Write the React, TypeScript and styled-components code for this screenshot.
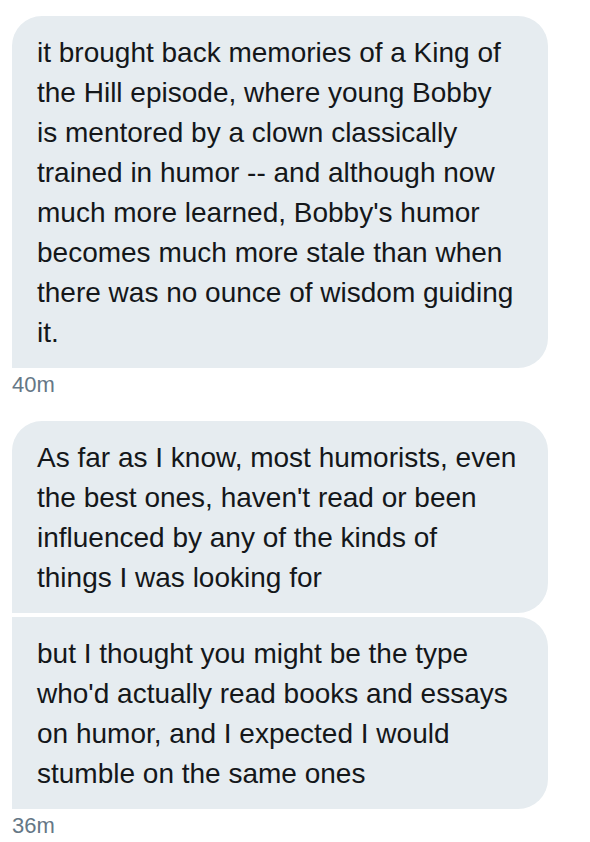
import React from "react";
import styled, { createGlobalStyle } from "styled-components";

const GlobalStyle = createGlobalStyle`
  html, body {
    margin: 0;
    padding: 0;
    background: #ffffff;
  }
  body {
    font-family: "Liberation Sans", Arial, Helvetica, sans-serif;
    -webkit-font-smoothing: antialiased;
  }
`;

const Thread = styled.div`
  display: flex;
  flex-direction: column;
  align-items: flex-start;
  padding: 16px 0 0 12px;
  width: 536px;
`;

const Group = styled.div`
  display: flex;
  flex-direction: column;
  width: 100%;
  & + & {
    margin-top: 23px;
  }
`;

const Stack = styled.div`
  display: flex;
  flex-direction: column;
  gap: 4px;
`;

type BubbleProps = { $first: boolean };

const Bubble = styled.div<BubbleProps>`
  box-sizing: border-box;
  width: 536px;
  background: #e6ecf0;
  color: #14171a;
  font-size: 28px;
  line-height: 40px;
  padding: 17px 20px 15px 25px;
  border-radius: ${(p) => (p.$first ? "30px" : "0")} 30px 30px 0;
  white-space: pre-line;
`;

const Stamp = styled.div`
  margin-top: 4px;
  font-size: 22px;
  line-height: 26px;
  color: #657786;
`;

const groups = [
  {
    time: "40m",
    messages: [
      "it brought back memories of a King of\nthe Hill episode, where young Bobby\nis mentored by a clown classically\ntrained in humor -- and although now\nmuch more learned, Bobby's humor\nbecomes much more stale than when\nthere was no ounce of wisdom guiding\nit.",
    ],
  },
  {
    time: "36m",
    messages: [
      "As far as I know, most humorists, even\nthe best ones, haven't read or been\ninfluenced by any of the kinds of\nthings I was looking for",
      "but I thought you might be the type\nwho'd actually read books and essays\non humor, and I expected I would\nstumble on the same ones",
    ],
  },
];

export default function App() {
  return (
    <>
      <GlobalStyle />
      <Thread>
        {groups.map((g) => (
          <Group key={g.time}>
            <Stack>
              {g.messages.map((m, i) => (
                <Bubble key={i} $first={i === 0}>
                  {m}
                </Bubble>
              ))}
            </Stack>
            <Stamp>{g.time}</Stamp>
          </Group>
        ))}
      </Thread>
    </>
  );
}
